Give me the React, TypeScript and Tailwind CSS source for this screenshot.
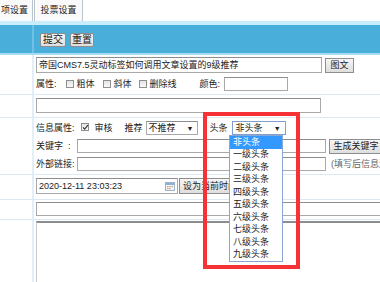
import React from "react";

const font = "font-['Liberation_Sans','Noto_Sans_CJK_SC',sans-serif]";

function Box({ className = "", children }: { className?: string; children?: React.ReactNode }) {
  return (
    <div className={`flex shrink-0 items-center border border-[#a9a9a9] border-t-[#8d8d8d] bg-white pl-[2px] ${className}`}>
      {children}
    </div>
  );
}

function Btn({ children, className = "" }: { children: React.ReactNode; className?: string }) {
  return (
    <div className={`flex items-center justify-center rounded-[2px] border border-[#8e8e8e] bg-gradient-to-b from-[#f6f6f6] to-[#dedede] text-[#222] ${className}`}>
      {children}
    </div>
  );
}

function Check({ on = false }: { on?: boolean }) {
  return (
    <span className="relative inline-block h-[8px] w-[8px] border border-[#8f8f8f] bg-gradient-to-b from-[#e4e4e4] to-[#fafafa]">
      {on && (
        <svg viewBox="0 0 8 8" className="absolute left-0 top-0 h-[7px] w-[7px]">
          <path d="M1.2 3.8 L3 5.8 L6.8 1.2" fill="none" stroke="#333" strokeWidth="1.3" />
        </svg>
      )}
    </span>
  );
}

function Row({ className = "", children }: { className?: string; children: React.ReactNode }) {
  return (
    <div className={`flex border-b border-[#dce9f4] ${className}`}>
      <div className="w-[34px] shrink-0 border-r-2 border-[#e2eef8]" />
      <div className="flex min-w-0 flex-1 flex-col pl-[2px]">{children}</div>
    </div>
  );
}

const levels = ["一级头条", "二级头条", "三级头条", "四级头条", "五级头条", "六级头条", "七级头条", "八级头条", "九级头条"];

export default function App() {
  return (
    <div className={`relative h-[282px] w-[380px] overflow-hidden bg-white text-[9px] leading-none text-[#222] ${font}`}>
      {/* tabs */}
      <div className="flex h-[21px] items-end gap-[1px] bg-white">
        <div className="flex h-[21px] w-[33px] items-center justify-end border-r border-[#b9c4ce] bg-[#fafafa] pr-[4px]">
          <span className="whitespace-nowrap">项设置</span>
        </div>
        <div className="flex h-[21px] w-[49px] items-center justify-center border-x border-[#b9c4ce] bg-[#fafafa]">
          投票设置
        </div>
      </div>
      <div className="h-[4px] bg-[#c8eefb]" />
      {/* toolbar */}
      <div className="flex h-[28px] bg-[#4aaedb]">
        <div className="w-[34px] border-r-2 border-[#6fc0e4]" />
        <div className="flex items-center gap-[4px] pl-[6px] pt-[1px]">
          <Btn className="h-[14px] w-[26px] text-[10px]">提交</Btn>
          <Btn className="h-[14px] w-[24px] text-[10px]">重置</Btn>
        </div>
      </div>
      <div className="h-[2px] bg-[#a6dbf1]" />

      {/* row 1 */}
      <Row className="h-[40px]">
        <div className="flex items-center gap-[3px] pt-[2px]">
          <Box className="h-[16px] w-[286px]">帝国CMS7.5灵动标签如何调用文章设置的9级推荐</Box>
          <Btn className="h-[15px] w-[29px] rounded-none">图文</Btn>
        </div>
        <div className="mt-[4px] flex h-[14px] items-center">
          <span>属性:</span>
          <span className="ml-[9px] flex items-center gap-[3px]"><Check />粗体</span>
          <span className="ml-[8px] flex items-center gap-[3px]"><Check />斜体</span>
          <span className="ml-[7px] flex items-center gap-[3px]"><Check />删除线</span>
          <span className="ml-[23px]">颜色:</span>
          <Box className="ml-[4px] h-[14px] w-[64px]" />
        </div>
      </Row>

      {/* row 2 */}
      <Row className="h-[23px]">
        <Box className="mt-[3px] h-[15px] w-[285px]" />
      </Row>

      {/* row 3 */}
      <Row className="h-[57px]">
        <div className="mt-[3px] flex h-[14px] items-center">
          <span>信息属性:</span>
          <span className="ml-[6px]"><Check on /></span>
          <span className="ml-[6px]">审核</span>
          <span className="ml-[12px]">推荐</span>
          <Box className="ml-[3px] h-[14px] w-[52px] justify-between pr-[3px]">
            <span>不推荐</span>
            <span className="text-[7px]">▼</span>
          </Box>
          <span className="ml-[12px]">头条</span>
          <div className="ml-[4px] flex h-[14px] w-[54px] items-center justify-between border border-[#7f9fd0] bg-white pl-[3px] pr-[4px]">
            <span>非头条</span>
            <span className="text-[7px]">▼</span>
          </div>
        </div>
        <div className="mt-[4px] flex h-[14px] items-center">
          <span className="w-[41px] shrink-0 whitespace-pre">关键字  :</span>
          <Box className="h-[14px] w-[249px]" />
          <Btn className="ml-[3px] h-[15px] w-[54px] shrink-0 rounded-none whitespace-nowrap">生成关键字</Btn>
        </div>
        <div className="mt-[4px] flex h-[14px] items-center">
          <span className="w-[41px] shrink-0 whitespace-nowrap">外部链接:</span>
          <Box className="h-[14px] w-[249px]" />
          <span className="ml-[5px] whitespace-nowrap text-[#666]">(填写后信息连接地址</span>
        </div>
      </Row>

      {/* row 4 */}
      <Row className="h-[25px]">
        <div className="mt-[3px] flex items-center gap-[1px]">
          <Box className="h-[16px] w-[142px] justify-between pr-[2px]">
            <span>2020-12-11 23:03:23</span>
            <svg viewBox="0 0 10 9" className="h-[9px] w-[10px]">
              <rect x="0.5" y="0.5" width="9" height="8" fill="#f4f8fc" stroke="#9fb3c8" />
              <rect x="1" y="1" width="8" height="2" fill="#8fb0d8" />
              <rect x="2" y="4" width="1.5" height="1.2" fill="#c9a070" />
              <rect x="4.2" y="4" width="1.5" height="1.2" fill="#c9a070" />
              <rect x="6.4" y="4" width="1.5" height="1.2" fill="#c9a070" />
              <rect x="2" y="6" width="1.5" height="1.2" fill="#c9a070" />
              <rect x="4.2" y="6" width="1.5" height="1.2" fill="#c9a070" />
            </svg>
          </Box>
          <Btn className="h-[16px] w-[60px] shrink-0 justify-start rounded-none pl-[3px] whitespace-nowrap">设为当前时间</Btn>
        </div>
      </Row>

      {/* row 5 */}
      <Row className="h-[20px]">
        <Box className="mt-[2px] h-[14px] w-[360px]" />
      </Row>

      {/* row 6 */}
      <Row className="h-[70px] border-b-0">
        <Box className="mt-[1px] h-[70px] w-[360px] border-[#c9c9c9] border-t-2" />
      </Row>

      {/* open select list */}
      <div className="absolute left-[229px] top-[135px] w-[54px] border border-[#8aa7d4] bg-white">
        <div className="flex h-[12.5px] items-center bg-[#3399ff] pl-[3px] text-white">非头条</div>
        {levels.map((l) => (
          <div key={l} className="flex h-[12.5px] items-center pl-[3px]">
            {l}
          </div>
        ))}
      </div>

      {/* red highlight */}
      <div className="pointer-events-none absolute left-[203px] top-[112px] h-[157px] w-[97px] border-[4px] border-[#f63236]" />
    </div>
  );
}
